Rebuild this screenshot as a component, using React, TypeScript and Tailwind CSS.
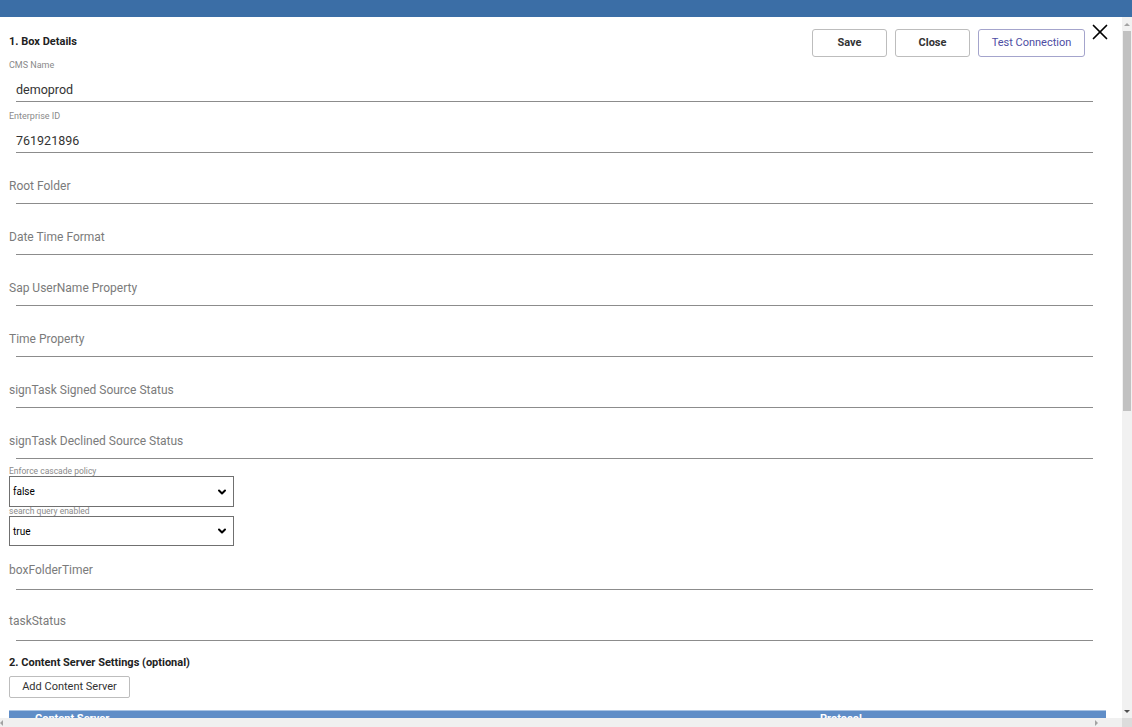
import { ChevronDown, X } from 'lucide-react';

const font = { fontFamily: 'Roboto, "Liberation Sans", sans-serif' };

function FilledField({ label, value, top }: { label: string; value: string; top: string }) {
  return (
    <div className={`pl-[9px] pr-[29px] ${top}`}>
      <div className="text-[9px] leading-[11px] text-[#8a8a8a]">{label}</div>
      <div className="ml-[7px] h-[31px] flex items-end pb-[3px] border-b border-[#8c8c8c]">
        <span className="text-[12.5px] leading-[16px] text-[#333]">{value}</span>
      </div>
    </div>
  );
}

function EmptyField({ label, h = 'h-[51px]', pb = 'pb-[9px]' }: { label: string; h?: string; pb?: string }) {
  return (
    <div className="pl-[9px] pr-[29px]">
      <div className={`ml-[7px] ${h} ${pb} flex items-end border-b border-[#8c8c8c]`}>
        <span className="-ml-[7px] text-[12px] leading-[16px] text-[#7b7b7b]">{label}</span>
      </div>
    </div>
  );
}

function SelectField({ label, value, h }: { label: string; value: string; h: string }) {
  return (
    <div className="pl-[9px]">
      <div className="text-[8.5px] leading-[9px] text-[#8a8a8a]">{label}</div>
      <div className={`w-[225px] ${h} border border-[#707070] flex items-center justify-between pl-[3px] pr-[5px]`}>
        <span className="text-[10px] text-black">{value}</span>
        <ChevronDown className="w-[12px] h-[12px] text-black" strokeWidth={4} />
      </div>
    </div>
  );
}

export default function App() {
  return (
    <div className="h-screen w-full flex flex-col bg-white overflow-hidden" style={font}>
      <div className="h-[17px] bg-[#3b6ea6] shrink-0" />

      <div className="flex-1 flex min-h-0">
        <div className="flex-1 min-w-0 overflow-hidden">
          {/* header with title and actions */}
          <div className="flex items-start justify-between pl-[9px] pr-[9px] pt-[12px]">
            <h2 className="mt-[5px] text-[11px] leading-[16px] font-bold text-[#222]">1. Box Details</h2>
            <div className="flex items-start">
              <div className="flex gap-[8px]">
                <button className="w-[75px] h-[28px] border border-[#bdbdbd] rounded-[3px] text-[11px] font-bold text-[#333]">Save</button>
                <button className="w-[75px] h-[28px] border border-[#bdbdbd] rounded-[3px] text-[11px] font-bold text-[#333]">Close</button>
                <button className="w-[107px] h-[28px] border border-[#a4a4cc] rounded-[3px] text-[11px] text-[#4d4da3]">Test Connection</button>
              </div>
              <X className="ml-[2px] -mt-[10px] w-[26px] h-[26px] text-black" strokeWidth={1.6} />
            </div>
          </div>

          <FilledField label="CMS Name" value="demoprod" top="pt-[3px]" />
          <FilledField label="Enterprise ID" value="761921896" top="pt-[9px]" />
          <EmptyField label="Root Folder" />
          <EmptyField label="Date Time Format" />
          <EmptyField label="Sap UserName Property" />
          <EmptyField label="Time Property" />
          <EmptyField label="signTask Signed Source Status" />
          <EmptyField label="signTask Declined Source Status" />

          <div className="pt-[8px]">
            <SelectField label="Enforce cascade policy" value="false" h="h-[31px]" />
            <SelectField label="search query enabled" value="true" h="h-[30px]" />
          </div>

          <EmptyField label="boxFolderTimer" h="h-[44px]" pb="pb-[11px]" />
          <EmptyField label="taskStatus" pb="pb-[11px]" />

          <div className="pl-[9px] pr-[16px]">
            <h2 className="mt-[14px] text-[11px] leading-[16px] font-bold text-[#222]">2. Content Server Settings (optional)</h2>
            <button className="mt-[5px] w-[121px] h-[22px] border border-[#bdbdbd] rounded-[2px] text-[11px] text-[#333]">Add Content Server</button>
            <div className="mt-[12px] h-[16px] bg-[#5f8dc7] border-t border-[#a9c3e3] flex text-[11px] font-bold text-white">
              <span className="pl-[26px] w-[811px]">Content Server</span>
              <span>Protocol</span>
            </div>
          </div>
        </div>

        {/* vertical scrollbar */}
        <div className="w-[10px] shrink-0 bg-[#f1f1f1] flex flex-col items-center">
          <div className="h-[14px] flex items-center justify-center">
            <div className="w-0 h-0 border-l-[3px] border-r-[3px] border-b-[3px] border-l-transparent border-r-transparent border-b-[#a3a3a3]" />
          </div>
          <div className="w-[8px] h-[380px] bg-[#c1c1c1]" />
          <div className="flex-1" />
          <div className="h-[14px] flex items-center justify-center">
            <div className="w-0 h-0 border-l-[3px] border-r-[3px] border-t-[3px] border-l-transparent border-r-transparent border-t-[#505050]" />
          </div>
        </div>
      </div>

      {/* horizontal scrollbar strip */}
      <div className="h-[9px] shrink-0 bg-[#f0f0f0] flex items-center justify-between">
        <div className="w-0 h-0 border-t-[3px] border-b-[3px] border-r-[3px] border-t-transparent border-b-transparent border-r-[#a3a3a3]" />
        <div className="flex items-center">
          <div className="w-0 h-0 mr-[24px] border-t-[3px] border-b-[3px] border-l-[3px] border-t-transparent border-b-transparent border-l-[#a3a3a3]" />
          <div className="w-[10px] h-[9px] bg-[#dcdcdc]" />
        </div>
      </div>
    </div>
  );
}
